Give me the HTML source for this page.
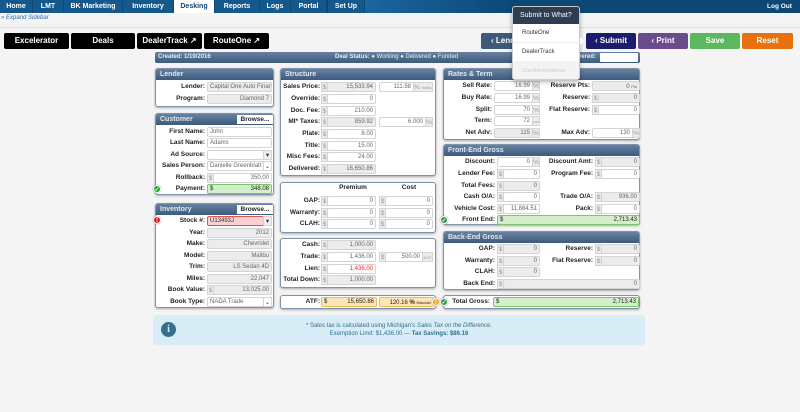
<!DOCTYPE html><html><head><style>
*{margin:0;padding:0;box-sizing:border-box}
i,b{font-style:normal}
body{width:800px;height:412px;background:#f4f4f4;font-family:"Liberation Sans",sans-serif;position:relative;overflow:hidden}
.abs,.L,.f,.a,.p,.h{position:absolute}
.nav{left:0;top:0;width:800px;height:13px;background:#0c4776}
.t{position:absolute;top:0;height:13px;background:#15588c;color:#fff;font:bold 7px "Liberation Sans";text-align:center;line-height:13px}
.t.on{background:#fff;color:#0c4776}
.bb{position:absolute;top:33px;height:16px;background:#000;color:#fff;font:bold 8px "Liberation Sans";text-align:center;line-height:16px;border-radius:2px}
.rb{position:absolute;top:33px;height:16px;color:#fff;font:bold 8px "Liberation Sans";text-align:center;line-height:16px;border-radius:2px}
.p{background:#fff;border:1px solid #7f93ab;border-radius:3px;box-shadow:0 1px 2px #aaa}
.h{left:0;top:0;right:0;height:11px;background:linear-gradient(#6781a0,#3c5a7c);color:#e4e8f0;font:bold 7px "Liberation Sans";padding-left:4px;line-height:11px;border-radius:2px 2px 0 0}
.L{font:bold 6.5px "Liberation Sans";text-align:right;color:#222;height:10px;line-height:10px;white-space:nowrap}
.f{height:10px;border:1px solid #d4d4d4;background:#fff;font:6px "Liberation Sans";text-align:right;color:#666;line-height:9px;padding:0 2px;border-radius:2px;white-space:nowrap;overflow:hidden}
.g{background:#ececec}
.a{height:10px;font:6.5px "Liberation Sans";color:#999;line-height:9px;text-align:center;background:#ececec;border:1px solid #d4d4d4;white-space:nowrap;overflow:hidden}
.lt{text-align:left}
.gr{background:#d2efc9;border-color:#7cc56e;color:#222}
.or{background:#fde6b4;border-color:#e9bc62;color:#222}
.ic{position:absolute;width:8px;height:8px;border-radius:50%;color:#fff;font:bold 6px "Liberation Sans";text-align:center;line-height:8px;border:1px solid #fff;box-shadow:0 0 1px #555}
</style></head><body>
<div class="abs nav"></div>
<div class="t" style="left:0;width:32px">Home</div><div class="t" style="left:33px;width:30px">LMT</div><div class="t" style="left:64px;width:58px">BK Marketing</div><div class="t" style="left:123px;width:50px">Inventory</div><div class="t on" style="left:174px;width:40px">Desking</div><div class="t" style="left:215px;width:44px">Reports</div><div class="t" style="left:260px;width:30px">Logs</div><div class="t" style="left:291px;width:35px">Portal</div><div class="t" style="left:328px;width:36px">Set Up</div>
<div class="t" style="left:365px;width:150px;background:linear-gradient(90deg,#1a66a0,#0c4776)"></div>
<div class="abs" style="left:767px;top:0;color:#fff;font:bold 6.5px 'Liberation Sans';line-height:13px">Log Out</div>
<div class="abs" style="left:1px;top:15px;color:#2a6bb0;font:italic 6px 'Liberation Sans'">» Expand Sidebar</div>
<div class="abs" style="left:0;top:27px;width:800px;height:1px;background:#ddd"></div>
<div class="bb" style="left:4px;width:65px">Excelerator</div><div class="bb" style="left:71px;width:64px">Deals</div><div class="bb" style="left:137px;width:65px">DealerTrack ↗</div><div class="bb" style="left:204px;width:65px">RouteOne ↗</div>
<div class="rb" style="left:481px;width:68px;background:#3d5a78;text-align:left;padding-left:10px">‹ Lender</div><div class="rb" style="left:586px;width:50px;background:#1c1c6c">‹ Submit</div><div class="rb" style="left:638px;width:50px;background:#6a4c8c">‹ Print</div><div class="rb" style="left:690px;width:50px;background:#5cb85c">Save</div><div class="rb" style="left:742px;width:51px;background:#e8720e">Reset</div>
<div class="abs" style="left:155px;top:52px;width:485px;height:11px;background:linear-gradient(#6781a0,#3c5a7c);border-radius:2px;color:#e8ecf2;font:bold 6px 'Liberation Sans';line-height:11px;padding-left:3px">Created: 1/19/2016<span style="position:absolute;left:180px;font-weight:bold">Deal Status: <span style="font-weight:normal">● Working ● Delivered ● Funded</span></span><span style="position:absolute;left:412px">Delivered:</span><span style="position:absolute;left:445px;top:1px;width:38px;height:9px;background:#fff;border-radius:1px"></span></div>
<!-- Lender -->
<div class="p" style="left:155px;top:68px;width:119px;height:39px"><div class="h">Lender</div></div>
<b class="L" style="left:155px;width:50px;top:82px">Lender:</b><i class="f g lt" style="left:207px;top:82px;width:65px">Capital One Auto Financ</i>
<b class="L" style="left:155px;width:50px;top:94px">Program:</b><i class="f g" style="left:207px;top:94px;width:65px">Diamond 7</i>
<!-- Customer -->
<div class="p" style="left:155px;top:113px;width:119px;height:82px"><div class="h">Customer</div><div class="abs" style="left:81px;top:1px;width:36px;height:9px;background:#fff;font:bold 6.5px 'Liberation Sans';text-align:center;line-height:9px;color:#222">Browse...</div></div>
<b class="L" style="left:155px;width:50px;top:127px">First Name:</b><i class="f lt" style="left:207px;top:127px;width:65px">John</i>
<b class="L" style="left:155px;width:50px;top:138px">Last Name:</b><i class="f lt" style="left:207px;top:138px;width:65px">Adams</i>
<b class="L" style="left:155px;width:50px;top:150px">Ad Source:</b><i class="f" style="left:207px;top:150px;width:57px"></i><i class="a" style="left:263px;top:150px;width:9px;color:#333">▾</i>
<b class="L" style="left:155px;width:50px;top:161px">Sales Person:</b><i class="f lt" style="left:207px;top:161px;width:57px">Danielle Greenblatt</i><i class="a" style="left:263px;top:161px;width:9px;background:#fff;color:#333">⌄</i>
<b class="L" style="left:155px;width:50px;top:173px">Rollback:</b><i class="a" style="left:207px;top:173px;width:7px">$</i><i class="f" style="left:213px;top:173px;width:59px">350.00</i>
<b class="L" style="left:155px;width:50px;top:184px">Payment:</b><i class="f gr lt" style="left:207px;top:184px;width:65px">$<span style="float:right">348.08</span></i>
<div class="ic" style="left:153px;top:185px;background:#2f9a3c">✓</div>
<!-- Inventory -->
<div class="p" style="left:155px;top:203px;width:119px;height:105px"><div class="h">Inventory</div><div class="abs" style="left:81px;top:1px;width:36px;height:9px;background:#fff;font:bold 6.5px 'Liberation Sans';text-align:center;line-height:9px;color:#222">Browse...</div></div>
<b class="L" style="left:155px;width:50px;top:216px">Stock #:</b><i class="f lt" style="left:207px;top:216px;width:57px;background:#f9cfcf;border-color:#dd5555;color:#333">U13493J</i><i class="a" style="left:263px;top:216px;width:9px;color:#333">▾</i>
<div class="ic" style="left:153px;top:216px;background:#d71e1e">!</div>
<b class="L" style="left:155px;width:50px;top:228px">Year:</b><i class="f g" style="left:207px;top:228px;width:65px">2012</i>
<b class="L" style="left:155px;width:50px;top:239px">Make:</b><i class="f g" style="left:207px;top:239px;width:65px">Chevrolet</i>
<b class="L" style="left:155px;width:50px;top:251px">Model:</b><i class="f g" style="left:207px;top:251px;width:65px">Malibu</i>
<b class="L" style="left:155px;width:50px;top:262px">Trim:</b><i class="f g" style="left:207px;top:262px;width:65px">LS Sedan 4D</i>
<b class="L" style="left:155px;width:50px;top:274px">Miles:</b><i class="f g" style="left:207px;top:274px;width:65px">22,047</i>
<b class="L" style="left:155px;width:50px;top:285px">Book Value:</b><i class="a" style="left:207px;top:285px;width:7px">$</i><i class="f g" style="left:213px;top:285px;width:59px">13,025.00</i>
<b class="L" style="left:155px;width:50px;top:297px">Book Type:</b><i class="f lt" style="left:207px;top:297px;width:57px">NADA Trade</i><i class="a" style="left:263px;top:297px;width:9px;background:#fff;color:#333">⌄</i>
<!-- Structure -->
<div class="p" style="left:280px;top:68px;width:156px;height:108px"><div class="h">Structure</div></div>
<b class="L" style="left:280px;width:40px;top:82px">Sales Price:</b><i class="a" style="left:321px;top:82px;width:7px">$</i><i class="f g" style="left:327px;top:82px;width:49px">15,533.94</i><i class="f" style="left:379px;top:82px;width:35px">111.58</i><i class="a" style="left:413px;top:82px;width:20px">% <span style="font-size:4px">NetAdv</span></i>
<b class="L" style="left:280px;width:40px;top:94px">Override:</b><i class="a" style="left:321px;top:94px;width:7px">$</i><i class="f" style="left:327px;top:94px;width:49px">0</i>
<b class="L" style="left:280px;width:40px;top:106px">Doc. Fee:</b><i class="a" style="left:321px;top:106px;width:7px">$</i><i class="f" style="left:327px;top:106px;width:49px">210.00</i>
<b class="L" style="left:280px;width:40px;top:117px">MI* Taxes:</b><i class="a" style="left:321px;top:117px;width:7px">$</i><i class="f g" style="left:327px;top:117px;width:49px">859.92</i><i class="f" style="left:379px;top:117px;width:47px">6.000</i><i class="a" style="left:425px;top:117px;width:8px">%</i>
<b class="L" style="left:280px;width:40px;top:129px">Plate:</b><i class="a" style="left:321px;top:129px;width:7px">$</i><i class="f" style="left:327px;top:129px;width:49px">8.00</i>
<b class="L" style="left:280px;width:40px;top:141px">Title:</b><i class="a" style="left:321px;top:141px;width:7px">$</i><i class="f" style="left:327px;top:141px;width:49px">15.00</i>
<b class="L" style="left:280px;width:40px;top:152px">Misc Fees:</b><i class="a" style="left:321px;top:152px;width:7px">$</i><i class="f" style="left:327px;top:152px;width:49px">24.00</i>
<b class="L" style="left:280px;width:40px;top:164px">Delivered:</b><i class="a" style="left:321px;top:164px;width:7px">$</i><i class="f g" style="left:327px;top:164px;width:49px">16,650.86</i>
<!-- Premium -->
<div class="p" style="left:280px;top:182px;width:156px;height:51px"></div>
<b class="L" style="left:327px;width:52px;top:183px;text-align:center">Premium</b><b class="L" style="left:385px;width:48px;top:183px;text-align:center">Cost</b>
<b class="L" style="left:280px;width:40px;top:196px">GAP:</b><i class="a" style="left:321px;top:196px;width:7px">$</i><i class="f" style="left:327px;top:196px;width:49px">0</i><i class="a" style="left:379px;top:196px;width:7px">$</i><i class="f" style="left:385px;top:196px;width:48px">0</i>
<b class="L" style="left:280px;width:40px;top:208px">Warranty:</b><i class="a" style="left:321px;top:208px;width:7px">$</i><i class="f" style="left:327px;top:208px;width:49px">0</i><i class="a" style="left:379px;top:208px;width:7px">$</i><i class="f" style="left:385px;top:208px;width:48px">0</i>
<b class="L" style="left:280px;width:40px;top:219px">CLAH:</b><i class="a" style="left:321px;top:219px;width:7px">$</i><i class="f" style="left:327px;top:219px;width:49px">0</i><i class="a" style="left:379px;top:219px;width:7px">$</i><i class="f" style="left:385px;top:219px;width:48px">0</i>
<!-- Down -->
<div class="p" style="left:280px;top:238px;width:156px;height:50px"></div>
<b class="L" style="left:280px;width:40px;top:240px">Cash:</b><i class="a" style="left:321px;top:240px;width:7px">$</i><i class="f g" style="left:327px;top:240px;width:49px">1,000.00</i>
<b class="L" style="left:280px;width:40px;top:252px">Trade:</b><i class="a" style="left:321px;top:252px;width:7px">$</i><i class="f" style="left:327px;top:252px;width:49px">1,436.00</i><i class="a" style="left:379px;top:252px;width:7px">$</i><i class="f" style="left:385px;top:252px;width:38px">500.00</i><i class="a" style="left:422px;top:252px;width:11px;font-size:4px">ACV</i>
<b class="L" style="left:280px;width:40px;top:264px">Lien:</b><i class="a" style="left:321px;top:264px;width:7px">$</i><i class="f" style="left:327px;top:264px;width:49px;color:#e22">1,436.00</i>
<b class="L" style="left:280px;width:40px;top:275px">Total Down:</b><i class="a" style="left:321px;top:275px;width:7px">$</i><i class="f g" style="left:327px;top:275px;width:49px">1,000.00</i>
<!-- ATF -->
<div class="p" style="left:280px;top:295px;width:156px;height:14px"></div>
<b class="L" style="left:280px;width:40px;top:297px">ATF:</b><i class="f or lt" style="left:321px;top:297px;width:56px">$<span style="float:right">15,650.86</span></i><i class="f or" style="left:379px;top:297px;width:55px">120.16 <b>%</b> <span style="font-size:4px">MaxAdv</span></i>
<div class="ic" style="left:432px;top:298px;background:#f0a020">!</div>
<!-- Rates -->
<div class="p" style="left:443px;top:68px;width:197px;height:72px"><div class="h">Rates &amp; Term</div></div>
<b class="L" style="left:443px;width:49px;top:81px">Sell Rate:</b><i class="f" style="left:494px;top:81px;width:39px">16.99</i><i class="a" style="left:532px;top:81px;width:8px">%</i>
<b class="L" style="left:443px;width:49px;top:93px">Buy Rate:</b><i class="f" style="left:494px;top:93px;width:39px">16.99</i><i class="a" style="left:532px;top:93px;width:8px">%</i>
<b class="L" style="left:443px;width:49px;top:105px">Split:</b><i class="f" style="left:494px;top:105px;width:39px">70</i><i class="a" style="left:532px;top:105px;width:8px">%</i>
<b class="L" style="left:443px;width:49px;top:116px">Term:</b><i class="f" style="left:494px;top:116px;width:39px">72</i><i class="a" style="left:532px;top:116px;width:8px;font-size:4px">mo</i>
<b class="L" style="left:443px;width:49px;top:128px">Net Adv:</b><i class="f g" style="left:494px;top:128px;width:39px">115</i><i class="a" style="left:532px;top:128px;width:8px">%</i>
<b class="L" style="left:540px;width:50px;top:81px">Reserve Pts:</b><i class="f g" style="left:592px;top:81px;width:48px">0 <span style="font-size:4px">Pts</span></i>
<b class="L" style="left:540px;width:50px;top:93px">Reserve:</b><i class="a" style="left:592px;top:93px;width:7px">$</i><i class="f g" style="left:598px;top:93px;width:42px">0</i>
<b class="L" style="left:540px;width:50px;top:105px">Flat Reserve:</b><i class="a" style="left:592px;top:105px;width:7px">$</i><i class="f" style="left:598px;top:105px;width:42px">0</i>
<b class="L" style="left:540px;width:50px;top:128px">Max Adv:</b><i class="f" style="left:592px;top:128px;width:41px">130</i><i class="a" style="left:632px;top:128px;width:8px">%</i>
<!-- Front-End -->
<div class="p" style="left:443px;top:144px;width:197px;height:81px"><div class="h">Front-End Gross</div></div>
<b class="L" style="left:443px;width:52px;top:157px">Discount:</b><i class="f" style="left:497px;top:157px;width:36px">0</i><i class="a" style="left:532px;top:157px;width:8px">%</i>
<b class="L" style="left:443px;width:52px;top:169px">Lender Fee:</b><i class="a" style="left:497px;top:169px;width:7px">$</i><i class="f" style="left:503px;top:169px;width:37px">0</i>
<b class="L" style="left:443px;width:52px;top:181px">Total Fees:</b><i class="a" style="left:497px;top:181px;width:7px">$</i><i class="f g" style="left:503px;top:181px;width:37px">0</i>
<b class="L" style="left:443px;width:52px;top:192px">Cash O/A:</b><i class="a" style="left:497px;top:192px;width:7px">$</i><i class="f" style="left:503px;top:192px;width:37px">0</i>
<b class="L" style="left:443px;width:52px;top:204px">Vehicle Cost:</b><i class="a" style="left:497px;top:204px;width:7px">$</i><i class="f" style="left:503px;top:204px;width:37px">11,884.51</i>
<b class="L" style="left:545px;width:48px;top:157px">Discount Amt:</b><i class="a" style="left:595px;top:157px;width:7px">$</i><i class="f g" style="left:601px;top:157px;width:39px">0</i>
<b class="L" style="left:545px;width:48px;top:169px">Program Fee:</b><i class="a" style="left:595px;top:169px;width:7px">$</i><i class="f" style="left:601px;top:169px;width:39px">0</i>
<b class="L" style="left:545px;width:48px;top:192px">Trade O/A:</b><i class="a" style="left:595px;top:192px;width:7px">$</i><i class="f g" style="left:601px;top:192px;width:39px">936.00</i>
<b class="L" style="left:545px;width:48px;top:204px">Pack:</b><i class="a" style="left:595px;top:204px;width:7px">$</i><i class="f" style="left:601px;top:204px;width:39px">0</i>
<b class="L" style="left:443px;width:52px;top:215px">Front End:</b><i class="f gr lt" style="left:497px;top:215px;width:143px">$<span style="float:right">2,713.43</span></i>
<div class="ic" style="left:440px;top:216px;background:#2f9a3c">✓</div>
<!-- Back-End -->
<div class="p" style="left:443px;top:231px;width:197px;height:59px"><div class="h">Back-End Gross</div></div>
<b class="L" style="left:443px;width:52px;top:244px">GAP:</b><i class="a" style="left:497px;top:244px;width:7px">$</i><i class="f g" style="left:503px;top:244px;width:37px">0</i>
<b class="L" style="left:443px;width:52px;top:256px">Warranty:</b><i class="a" style="left:497px;top:256px;width:7px">$</i><i class="f g" style="left:503px;top:256px;width:37px">0</i>
<b class="L" style="left:443px;width:52px;top:267px">CLAH:</b><i class="a" style="left:497px;top:267px;width:7px">$</i><i class="f g" style="left:503px;top:267px;width:37px">0</i>
<b class="L" style="left:443px;width:52px;top:279px">Back End:</b><i class="a" style="left:497px;top:279px;width:7px">$</i><i class="f g" style="left:503px;top:279px;width:137px">0</i>
<b class="L" style="left:545px;width:48px;top:244px">Reserve:</b><i class="a" style="left:595px;top:244px;width:7px">$</i><i class="f g" style="left:601px;top:244px;width:39px">0</i>
<b class="L" style="left:545px;width:48px;top:256px">Flat Reserve:</b><i class="a" style="left:595px;top:256px;width:7px">$</i><i class="f g" style="left:601px;top:256px;width:39px">0</i>
<!-- Total -->
<div class="p" style="left:443px;top:295px;width:197px;height:14px"></div>
<b class="L" style="left:443px;width:47px;top:297px">Total Gross:</b><i class="f gr lt" style="left:493px;top:297px;width:146px">$<span style="float:right">2,713.43</span></i>
<div class="ic" style="left:440px;top:298px;background:#2f9a3c">✓</div>
<!-- Info -->
<div class="abs" style="left:153px;top:315px;width:492px;height:30px;background:#d9edf7;border-radius:3px;color:#31708f;font:6px 'Liberation Sans';text-align:center;line-height:8px;padding-top:7px">* Sales tax is calculated using Michigan's <i style="font-style:italic">Sales Tax on the Difference</i>.<br>Exemption Limit: $1,436.00 — <b>Tax Savings: $86.16</b>
<div class="abs" style="left:8px;top:7px;width:15px;height:15px;border-radius:50%;background:#31708f;color:#d9edf7;font:bold 10px 'Liberation Serif';line-height:15px">i</div></div>
<!-- Dropdown -->
<div class="abs" style="left:512px;top:6px;width:68px;height:74px;background:#fff;border:1px solid #ccc;border-radius:3px;box-shadow:0 2px 5px rgba(0,0,0,.3);font:6px 'Liberation Sans';overflow:hidden">
<div style="height:17px;background:#2d3e52;color:#fff;font-size:7px;line-height:17px;padding-left:7px">Submit to What?</div>
<div style="height:19px;line-height:19px;padding-left:9px;color:#333;border-bottom:1px solid #eee">RouteOne</div>
<div style="height:18px;line-height:18px;padding-left:9px;color:#333">DealerTrack</div>
<div style="height:20px;line-height:20px;padding-left:9px;color:#ccc;background:#f3f3f3;font-size:5.5px">CreditAcceptance</div></div>
<div class="abs" style="left:580px;top:37px;width:0;height:0;border:4px solid transparent;border-left-color:#fff"></div>
</body></html>
